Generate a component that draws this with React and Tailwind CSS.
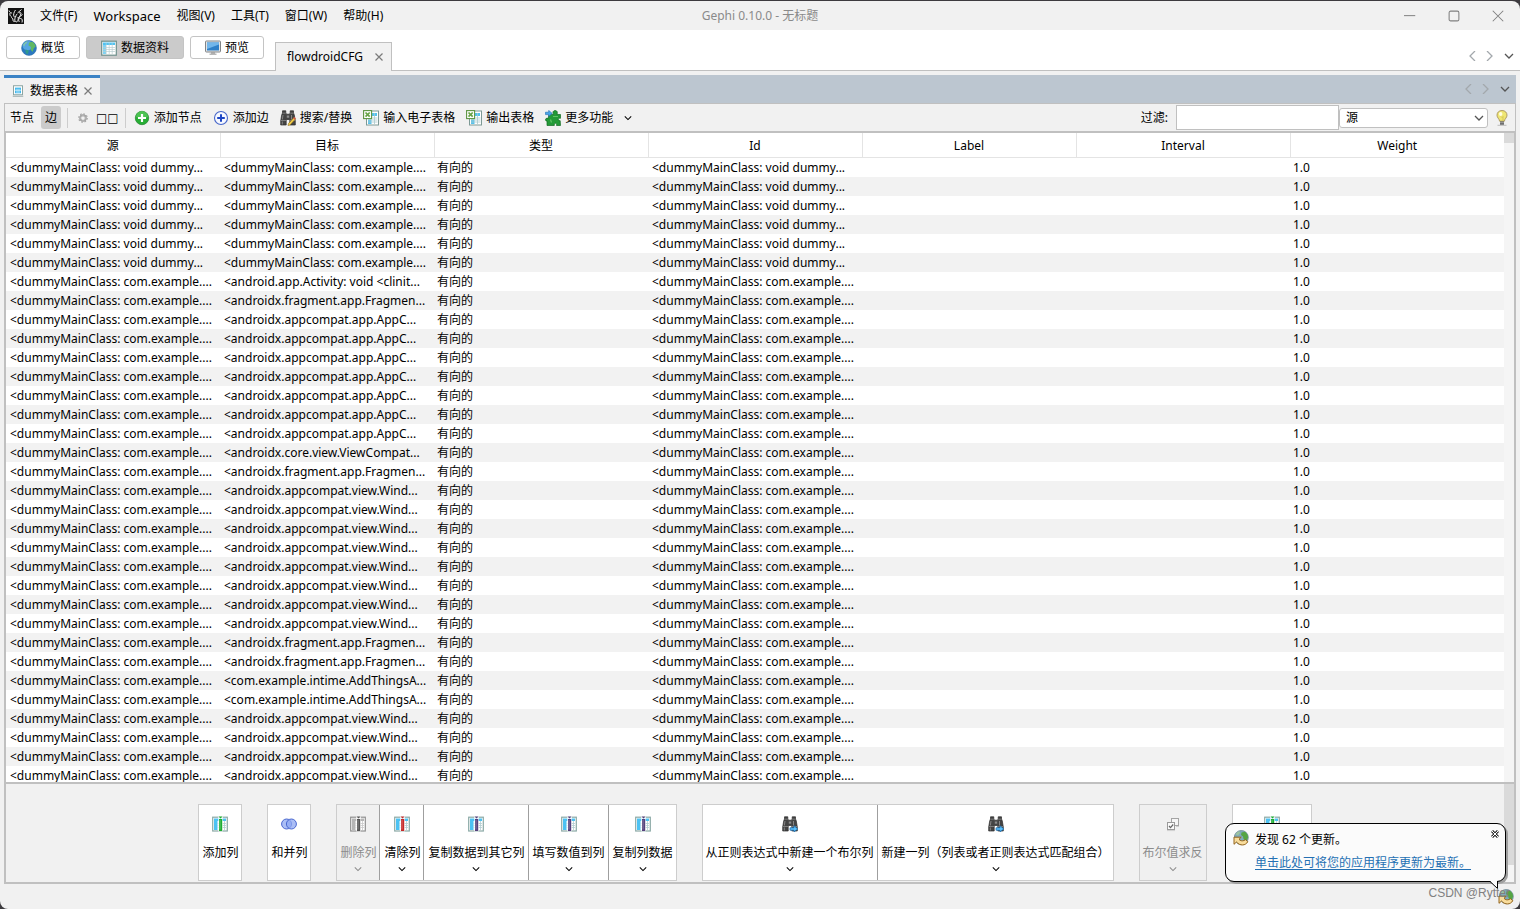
import React from "react";

const MAIN = "<dummyMainClass: com.example....";
const DUMMY = "<dummyMainClass: void dummy...";
const APPC = "<androidx.appcompat.app.AppC...";
const WIND = "<androidx.appcompat.view.Wind...";
const FRAG = "<androidx.fragment.app.Fragmen...";
const INTIME = "<com.example.intime.AddThingsA...";

const repeat = (n, value) => Array.from({ length: n }, () => value);

const ROWS = [
  ...repeat(6, [DUMMY, MAIN]),
  [MAIN, "<android.app.Activity: void <clinit..."],
  [MAIN, FRAG],
  ...repeat(7, [MAIN, APPC]),
  [MAIN, "<androidx.core.view.ViewCompat..."],
  [MAIN, FRAG],
  ...repeat(8, [MAIN, WIND]),
  ...repeat(2, [MAIN, FRAG]),
  ...repeat(2, [MAIN, INTIME]),
  ...repeat(4, [MAIN, WIND]),
];

const COLUMNS = ["源", "目标", "类型", "Id", "Label", "Interval", "Weight"];

function Svg({ children, className = "size-4" }) {
  return (
    <svg viewBox="0 0 16 16" className={`${className} shrink-0`} fill="none" aria-hidden="true">
      {children}
    </svg>
  );
}

function Chevron({ className = "", size = "size-2.5", dir = "down" }) {
  const d = { down: "M1 3l4 4 4-4", left: "M7 0L2 5l5 5", right: "M3 0l5 5-5 5" }[dir];
  return (
    <svg viewBox="0 0 10 10" className={`${size} shrink-0 ${className}`} fill="none" stroke="currentColor" strokeWidth="1.3" aria-hidden="true">
      <path d={d} />
    </svg>
  );
}

function Close({ className = "size-2" }) {
  return (
    <svg viewBox="0 0 8 8" className={className} fill="none" stroke="#7a7a7a" strokeWidth="1.2" aria-hidden="true">
      <path d="M.5.5l7 7M7.5.5l-7 7" />
    </svg>
  );
}

function GephiLogo() {
  return (
    <Svg>
      <rect width="16" height="16" fill="#111" />
      <path d="M1 2.500c.5 2 2 2.500 3 2.500M2 5c-.5 2 0 3 1.500 3.500M3 9.500c1 0 2 1 2 2.500s1 2 2 1M7.500 2C6 4 5 7 6 8.500s2-1 3-2.500M8 8c-1 2-2 4-.5 5.500S11 12 10 9M9.500 5l4-3.500M11 5c2-1 2.500 0 1.500 2s-2 3.500 0 3.500 2 2 1.500 4M11 10c-.5 2-.5 3 .5 4M14.500 6.500l-4 3" stroke="#eee" strokeWidth="1" />
    </Svg>
  );
}

function Globe() {
  return (
    <Svg>
      <circle cx="8" cy="8" r="7.500" fill="#2a78c0" />
      <circle cx="6.500" cy="5.500" r="5" fill="#62b0ea" opacity=".8" />
      <path d="M1.800 5C3 2.500 5 1.200 6.500 1L6 3 4 4.500l-.5 2z" fill="#7cc4b0" />
      <path d="M8 2.500L11.500 1.800c1.800 1.200 3 2.700 3.300 4.700L13 8l-1.500 4-2-2.500L10 7 7.500 5.500z" fill="#5fb863" />
      <path d="M4.500 9.500l3.500 1-1.500 4C5 14 4.200 12 4.500 9.500z" fill="#2f9a8c" />
      <circle cx="8" cy="8" r="7.400" stroke="#3a78b0" strokeWidth=".6" />
    </Svg>
  );
}

function Sheet() {
  return (
    <Svg>
      <rect x=".7" y="1.200" width="14.600" height="14" fill="#fff" stroke="#6f8f8b" strokeWidth="1.200" />
      <rect x="2" y="2.500" width="12" height="2.500" fill="#4fc3f2" />
      <rect x="2" y="5" width="3" height="9" fill="#7fd3f5" />
      <path d="M2 7.500h12M2 9.500h12M2 11.500h12M5.200 3v11M8.200 3v11M11.200 3v11" stroke="#b9cfd0" strokeWidth=".7" />
    </Svg>
  );
}

function Monitor() {
  return (
    <Svg>
      <rect x=".5" y="1" width="15" height="11" rx=".8" fill="#e4e4e4" stroke="#808487" />
      <rect x="2" y="2.500" width="12" height="8" fill="#2f80c8" />
      <path d="M2 2.500h12v2L2 9z" fill="#72b6ea" />
      <path d="M6 12h4v2H6z" fill="#a6a6a6" />
      <path d="M4.500 13.500h7V15h-7z" fill="#b8b8b8" />
    </Svg>
  );
}

function SmallSheet() {
  return (
    <Svg className="size-3">
      <rect x="2" y="1" width="12" height="12" fill="#fff" stroke="#8aa3a0" strokeWidth="1.300" />
      <rect x="4" y="3.500" width="8" height="7.500" fill="#40b8ee" />
      <path d="M4 7h8M6.700 5v6M9.300 5v6" stroke="#dff3fb" />
      <path d="M1 15h14" stroke="#9aa" strokeWidth="1.300" />
    </Svg>
  );
}

function Gear() {
  return (
    <Svg className="size-2.5">
      <circle cx="8" cy="8" r="4.500" stroke="#9a9a9a" strokeWidth="3" />
      <circle cx="8" cy="8" r="6.800" stroke="#a6a6a6" strokeWidth="2" strokeDasharray="2.600 2.700" />
      <circle cx="8" cy="8" r="4" stroke="#c9c9c9" />
    </Svg>
  );
}

function AddNode() {
  return (
    <Svg>
      <circle cx="8" cy="8" r="6.700" fill="#27ae35" stroke="#2c8a38" strokeWidth=".8" />
      <path d="M2 7a6 6 0 0112 0c-3 1.500-9 1.500-12 0z" fill="#5ccc5f" opacity=".7" />
      <path d="M8 4v8M4 8h8" stroke="#fff" strokeWidth="2.200" />
    </Svg>
  );
}

function AddEdge() {
  return (
    <Svg>
      <circle cx="8" cy="8" r="6.500" fill="#f6f8ff" stroke="#4767c9" strokeWidth="1.100" />
      <path d="M8 4.200v7.600M4.200 8h7.600" stroke="#1c45c4" strokeWidth="2" />
    </Svg>
  );
}

function Binoculars({ badge }) {
  return (
    <Svg>
      <path d="M2.500.8h3.300V3l.7 1.200h3L10.200 3V.8h3.300V3l.8 2 1 6v4H9.800V9.500H6.200V15H.7v-4l1-6 .8-2z" fill="#444" stroke="#2b2b2b" strokeWidth=".7" />
      <path d="M2.500 3.200h3.300M10.200 3.200h3.300M1 10.500h5M10 10.500h5" stroke="#8a8a8a" strokeWidth=".8" />
      <path d="M3 5l-.7 4.500M11.500 5v4.500M2.300 11.500v3" stroke="#858585" />
      <path d="M6.800 5.500h2.400v2.200H6.800z" fill="#8b8b8b" />
      {badge === "pencil" && (
        <>
          <path d="M8.500 13.500L14 7.500l1.500 1.500-5.500 6-2 .5z" fill="#f2cf4d" stroke="#8d6a17" strokeWidth=".6" />
          <path d="M13.200 8.300L14.300 7l1.500 1.500-1.200 1.200z" fill="#d4564c" />
        </>
      )}
      {badge === "arrow" && (
        <path d="M8 11.800h4V9.700l3.800 3.300-3.800 2.800V14.200H8z" fill="#5cc0fa" stroke="#1769ad" strokeWidth=".7" />
      )}
    </Svg>
  );
}

function Spreadsheet() {
  return (
    <Svg>
      <rect x="3.500" y="1" width="12" height="14" fill="#fff" stroke="#7d9995" />
      <path d="M9 3h5v3H9zM5 9.500h3.500V14H5z" fill="#55c3ef" />
      <path d="M5 10h9.500M5 12h9.500M11.500 3v11M9.500 8h5" stroke="#a9c9cd" strokeWidth=".8" />
      <rect x=".6" y=".6" width="8" height="8" fill="#fff" stroke="#5c9440" strokeWidth="1.100" />
      <path d="M2.500 2.500l4.200 4.200M6.700 2.500L2.500 6.700" stroke="#66a344" strokeWidth="1.700" />
    </Svg>
  );
}

function Puzzle() {
  return (
    <Svg>
      <path d="M4 4.500h4.500C7 1.500 9 .5 10.200.5c1.600 0 2.800 1.500 1.800 4h3.500v3.800c-2.500-.7-3.200 2.200-.3 2.400l.3 4.800h-4c.7-3-2.500-3-2.200 0H2V11C-.5 11 0 7.500 3 8.500z" fill="#239a37" stroke="#126c23" strokeWidth=".7" />
      <path d="M8 6.500h5M5.500 9.500l1 3" stroke="#60c465" strokeWidth="1.200" />
      <path d="M.5 2.200h3.200V.4l3.500 3-3.500 3V4.600H.5z" fill="#4aa6ea" stroke="#1e6bb0" strokeWidth=".6" />
    </Svg>
  );
}

function Bulb() {
  return (
    <Svg>
      <path d="M8 .5c3.200 0 5 2.200 5 4.700 0 2.500-2.300 3.500-2.600 6H5.600c-.3-2.500-2.600-3.500-2.600-6C3 2.700 4.800.5 8 .5z" fill="#efe673" stroke="#a8935f" strokeWidth=".9" />
      <ellipse cx="6.700" cy="4" rx="1.700" ry="2" fill="#fffde2" />
      <path d="M7 6.500l1 1 1-1v4" stroke="#cdb94f" strokeWidth=".7" />
      <path d="M6 11.500h4v3.300H6z" fill="#555" />
      <path d="M6 12.800h4" stroke="#ccc" strokeWidth=".8" />
      <path d="M3.500 15.300h9" stroke="#bbb" strokeWidth="1" />
    </Svg>
  );
}

function ColumnIcon({ bar, gray }) {
  return (
    <Svg>
      <rect x=".7" y="1.200" width="14.600" height="13.800" fill="#fff" stroke={gray ? "#8f8f8f" : "#8ba9a6"} strokeWidth="1.200" />
      <path d="M2 2.500h12V5H5.500v9H2z" fill={gray ? "#b5b5b5" : "#4cc2f3"} />
      <path d="M5.500 7.500H14M5.500 9.500H14M5.500 11.500H14M12.500 5v9" stroke={gray ? "#c9c9c9" : "#b3cdd0"} strokeWidth=".8" />
      <path d="M6 0h5v15.500H6z" fill="#fff" fillOpacity=".7" />
      <rect x="7" y="3" width="3.200" height="12" fill={bar} />
      <path d="M8 4v9.500" stroke="#fff" strokeOpacity=".4" strokeWidth=".8" />
      <path d="M6.500.5h4L8.600 2.400z" fill={bar} />
    </Svg>
  );
}

function Merge() {
  return (
    <Svg>
      <circle cx="5.600" cy="8" r="5" fill="#8fa8f2" fillOpacity=".75" stroke="#4a68d0" />
      <circle cx="10.400" cy="8" r="5" fill="#8fa8f2" fillOpacity=".75" stroke="#4a68d0" />
    </Svg>
  );
}

function Negate() {
  return (
    <Svg>
      <rect x="6.500" y="2.500" width="7" height="7" fill="#f6f6f6" stroke="#a4a4a4" />
      <rect x="2.500" y="6.500" width="7" height="7" fill="#fafafa" stroke="#9a9a9a" />
      <path d="M4 10l1.500 1.700L8.200 8.500" stroke="#666" strokeWidth="1.200" />
      <path d="M2 14.600h8M11 10.500h3" stroke="#cfcfcf" />
    </Svg>
  );
}

function UpdateGlobe() {
  return (
    <Svg>
      <circle cx="8.300" cy="7.500" r="7" fill="#7fa9bb" stroke="#6c8792" strokeWidth=".8" />
      <path d="M2.500 4.500C3.500 2.500 5 1.500 6.500 1.200L7 3 5 5.500z" fill="#9cc4a0" />
      <path d="M8.500 2.500l3.500-.8c2 1.300 3 3.500 3 5.800l-1.500 4-3-2.500L10 6.500 8 5z" fill="#55a544" />
      <path d="M1 7.200h7.200L6 9.300c1.200 1.500 3.200 1.900 5 1.200l1.500-.8 2.300 2C12.500 15.800 7 16.200 3.500 12L1 14.300z" fill="#f8dc9c" stroke="#94651c" strokeWidth="1" />
    </Svg>
  );
}

function MenuItem({ children }) {
  return <button className="whitespace-nowrap">{children}</button>;
}

function Perspective({ icon, label, active }) {
  return (
    <button
      aria-pressed={!!active}
      className={`flex h-[23px] items-center gap-1 rounded-[3px] border px-3.5 ${
        active ? "border-[#c4c4c4] bg-[#cbcbcb]" : "border-[#c4c4c4] bg-white"
      }`}
    >
      {icon}
      <span className="text-xs whitespace-nowrap">{label}</span>
    </button>
  );
}

function Tool({ icon, label }) {
  return (
    <button className="flex items-center gap-1 whitespace-nowrap">
      {icon}
      <span>{label}</span>
    </button>
  );
}

function ColumnAction({ icon, label, width = "", menu = true, disabled }) {
  return (
    <button
      disabled={disabled}
      className={`flex h-[75px] flex-col items-center px-[3px] pt-[11px] not-first:pl-1 ${width} ${
        disabled ? "bg-[#f0f0f0] text-[#8c8c8c]" : "bg-white"
      }`}
    >
      {icon}
      <span className="mt-[11px] leading-5 whitespace-nowrap">{label}</span>
      {menu && <Chevron size="size-2" className="mt-0.5" />}
    </button>
  );
}

function ActionGroup({ children }) {
  return (
    <div className="flex divide-x divide-[#9f9f9f] border border-[#cdcdcd]">{children}</div>
  );
}

function Separator({ className = "" }) {
  return <span className={`h-5 w-px bg-[#cdcdcd] ${className}`} />;
}

function TabArrows() {
  return (
    <div className="flex items-center gap-1.5">
      <button aria-label="向左滚动"><Chevron dir="left" className="text-[#a3a8ac]" /></button>
      <button aria-label="向右滚动"><Chevron dir="right" className="text-[#a3a8ac]" /></button>
      <button aria-label="显示标签列表" className="ml-1"><Chevron className="text-[#555]" /></button>
    </div>
  );
}

export default function App() {
  return (
    <div className="h-screen overflow-hidden bg-[#3d3b3f] pt-px font-['Noto_Sans','Noto_Sans_CJK_SC',sans-serif] text-xs text-black">
      <div className="relative flex h-full flex-col overflow-hidden rounded-lg bg-[#f1f1f1]">
        <header className="grid h-[29px] shrink-0 grid-cols-[1fr_auto_1fr] items-center">
          <nav className="flex items-center gap-4 pl-2">
            <GephiLogo />
            <MenuItem>文件(F)</MenuItem>
            <button className="text-[13px] leading-4">Workspace</button>
            <MenuItem>视图(V)</MenuItem>
            <MenuItem>工具(T)</MenuItem>
            <MenuItem>窗口(W)</MenuItem>
            <MenuItem>帮助(H)</MenuItem>
          </nav>
          <h1 className="text-[#8a8a8a]">Gephi 0.10.0 - 无标题</h1>
          <div className="flex items-center justify-end gap-8 pr-4 text-[#808080]">
            <button aria-label="最小化"><Svg className="size-3"><path d="M0 7.500h15" stroke="currentColor" strokeWidth="1.300" /></Svg></button>
            <button aria-label="最大化"><Svg className="size-3"><rect x="1.500" y="1.500" width="13" height="13" rx="2" stroke="currentColor" strokeWidth="1.400" /></Svg></button>
            <button aria-label="关闭"><Svg className="size-3"><path d="M1 1l14 14M15 1L1 15" stroke="currentColor" strokeWidth="1.400" /></Svg></button>
          </div>
        </header>

        <div className="flex h-[41px] shrink-0 border-b border-[#c0c0c0] bg-white">
          <div className="flex gap-1.5 pt-1.5 pl-1.5">
            <Perspective icon={<Globe />} label="概览" />
            <Perspective icon={<Sheet />} label="数据资料" active />
            <Perspective icon={<Monitor />} label="预览" />
          </div>
          <div className="-mb-px ml-[11px] flex items-center gap-3 self-end border border-b-0 border-[#c0c0c0] bg-[#f1f1f1] py-1 pr-2 pl-[11px]">
            <span className="leading-5">flowdroidCFG</span>
            <button aria-label="关闭 flowdroidCFG"><Close /></button>
          </div>
          <div className="mt-3 mr-1.5 ml-auto flex items-center">
            <TabArrows />
          </div>
        </div>

        <main className="flex min-h-0 flex-1 flex-col px-1 pt-1">
          <div className="flex h-7 shrink-0 justify-between bg-[#bcc6d0]">
            <div className="flex items-center gap-1.5 border-t-3 border-[#3c83c5] bg-[#f1f1f1] px-2">
              <SmallSheet />
              <span>数据表格</span>
              <button aria-label="关闭 数据表格"><Close /></button>
            </div>
            <div className="mr-1.5 flex items-center">
              <TabArrows />
            </div>
          </div>

          <section className="flex min-h-0 flex-1 flex-col border border-[#c0c0c0]">
            <div className="flex h-[27px] shrink-0 items-center pl-[5px]">
              <button>节点</button>
              <button aria-pressed="true" className="ml-[7px] h-[23px] rounded-[3px] bg-[#cbcbcb] px-1">边</button>
              <Separator className="ml-1.5" />
              <button aria-label="设置" className="ml-2.5"><Gear /></button>
              <button className="ml-2 font-['DejaVu_Sans',sans-serif]">□□</button>
              <Separator className="ml-1.5" />
              <div className="ml-2 flex items-center gap-[11px]">
                <Tool icon={<AddNode />} label="添加节点" />
                <Tool icon={<AddEdge />} label="添加边" />
                <Tool icon={<Binoculars badge="pencil" />} label="搜索/替换" />
                <Tool icon={<Spreadsheet />} label="输入电子表格" />
                <Tool icon={<Spreadsheet />} label="输出表格" />
                <Tool icon={<Puzzle />} label="更多功能" />
                <button aria-label="更多功能菜单"><Chevron size="size-2" /></button>
              </div>
              <label htmlFor="filter" className="ml-auto">过滤:</label>
              <input id="filter" type="text" className="ml-2 h-[25px] w-[163px] border border-[#c0c0c0] bg-white px-1 outline-none" />
              <div className="relative">
                <select aria-label="过滤列" className="block h-5 w-[149px] appearance-none rounded-[3px] border border-[#c0c0c0] bg-white pl-1.5 leading-4">
                  {COLUMNS.map((c) => <option key={c}>{c}</option>)}
                </select>
                <Chevron className="pointer-events-none absolute top-[5px] right-1 text-[#555]" />
              </div>
              <button aria-label="提示" className="mr-[5px] ml-1.5"><Bulb /></button>
            </div>

            <div className="flex min-h-0 flex-1 flex-col border border-t-2 border-[#c0c0c0]">
              <div className="flex min-h-0 flex-1">
                <div className="min-w-0 flex-1 overflow-hidden bg-white">
                  <table className="w-full table-fixed border-collapse">
                    <thead>
                      <tr className="h-6 border-b border-[#e4e4e4]">
                        {COLUMNS.map((c) => (
                          <th key={c} className="border-r border-[#e4e4e4] px-0 pt-0.5 pb-0 leading-5 font-normal last:border-r-0">{c}</th>
                        ))}
                      </tr>
                    </thead>
                    <tbody>
                      {ROWS.map(([source, target], i) => (
                        <tr key={i} className="leading-[19px] whitespace-nowrap even:bg-[#f2f2f2]">
                          <td className="overflow-hidden py-0 pr-0 pl-1">{source}</td>
                          <td className="overflow-hidden py-0 pr-0 pl-1">{target}</td>
                          <td className="py-0 pr-0 pl-[3px]">有向的</td>
                          <td className="overflow-hidden py-0 pr-0 pl-1">{source}</td>
                          <td />
                          <td />
                          <td className="py-0 pr-0 pl-[3px]">1.0</td>
                        </tr>
                      ))}
                    </tbody>
                  </table>
                </div>
                <div className="w-2.5 shrink-0 bg-[#f5f5f5]">
                  <div className="h-2.5 bg-[#dadada]" />
                </div>
              </div>

              <div className="flex shrink-0 border-t-2 border-[#c0c0c0]">
                <div className="flex min-w-0 flex-1 justify-center gap-[25px] pt-5 pb-px">
                  <ActionGroup>
                    <ColumnAction icon={<ColumnIcon bar="#1eae33" />} label="添加列" menu={false} />
                  </ActionGroup>
                  <ActionGroup>
                    <ColumnAction icon={<Merge />} label="和并列" menu={false} />
                  </ActionGroup>
                  <ActionGroup>
                    <ColumnAction icon={<ColumnIcon bar="#555" gray />} label="删除列" disabled />
                    <ColumnAction icon={<ColumnIcon bar="#c62828" />} label="清除列" />
                    <ColumnAction icon={<ColumnIcon bar="#54407c" />} label="复制数据到其它列" />
                    <ColumnAction icon={<ColumnIcon bar="#54407c" />} label="填写数值到列" />
                    <ColumnAction icon={<ColumnIcon bar="#54407c" />} label="复制列数据" />
                  </ActionGroup>
                  <ActionGroup>
                    <ColumnAction icon={<Binoculars badge="arrow" />} label="从正则表达式中新建一个布尔列" />
                    <ColumnAction icon={<Binoculars badge="arrow" />} label="新建一列（列表或者正则表达式匹配组合）" />
                  </ActionGroup>
                  <ActionGroup>
                    <ColumnAction icon={<Negate />} label="布尔值求反" disabled />
                  </ActionGroup>
                  <ActionGroup>
                    <ColumnAction icon={<ColumnIcon bar="#1eae33" />} width="w-[78px]" menu={false} />
                  </ActionGroup>
                </div>
                <div className="w-2.5 shrink-0 bg-[#f5f5f5]">
                  <div className="h-[81px] bg-[#dadada]" />
                </div>
              </div>
            </div>
          </section>
        </main>

        <footer className="flex h-[25px] shrink-0 items-center justify-end pr-1.5">
          <span className="relative z-10 -mr-3 self-start font-['Liberation_Sans',sans-serif] leading-[18px] text-[#808080]">CSDN @Rytter</span>
          <button aria-label="更新"><UpdateGlobe /></button>
        </footer>

        <aside className="absolute right-3.5 bottom-[27px] flex w-[281px] gap-1.5 rounded-[9px] border border-black bg-[#fbfbfb] pt-1.5 pr-1.5 pb-2 pl-[7px] shadow-[2px_2px_0_#a0a0a0]">
          <UpdateGlobe />
          <div className="flex flex-1 flex-col gap-[3px]">
            <p className="leading-5">发现 62 个更新。</p>
            <a href="#update" className="leading-5 text-[#2470b3] underline underline-offset-2">单击此处可将您的应用程序更新为最新。</a>
          </div>
          <button aria-label="关闭通知" className="self-start">
            <svg viewBox="0 0 8 8" className="size-2" fill="none" aria-hidden="true">
              <path d="M1 1l6 6M7 1L1 7" stroke="#333" strokeWidth="3" />
              <path d="M1 1l6 6M7 1L1 7" stroke="#fff" strokeWidth="1" />
            </svg>
          </button>
          <svg viewBox="0 0 9 8" className="absolute -bottom-2 right-1.5 h-2 w-[9px]" fill="none" aria-hidden="true">
            <path d="M0 0l7.500 7V0z" fill="#fbfbfb" />
            <path d="M0 .5l7.500 7V0" stroke="#000" />
          </svg>
        </aside>
      </div>
    </div>
  );
}
